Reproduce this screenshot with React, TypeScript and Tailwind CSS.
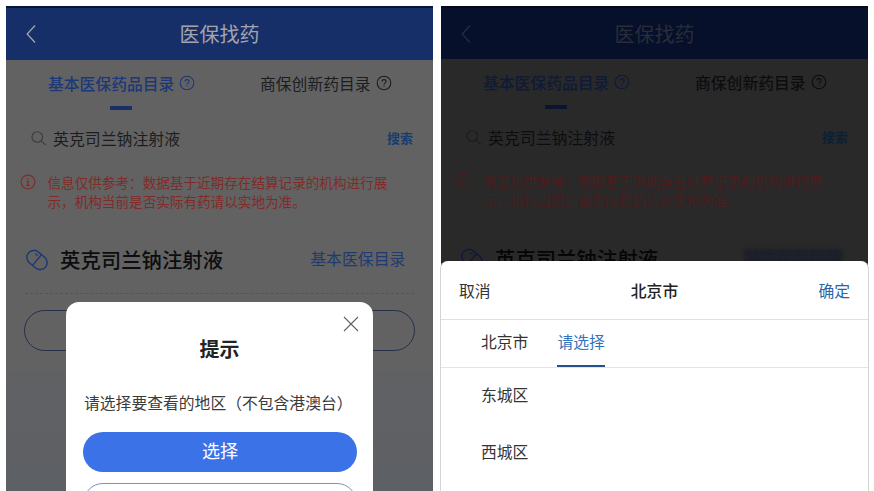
import { clsx } from "clsx";

type Dim = "light" | "dark";

function HelpIcon({ className }: { className: string }) {
  return (
    <svg className={className} width="16" height="16" viewBox="0 0 16 16" fill="none" stroke="currentColor">
      <circle cx="8" cy="8" r="6.8" strokeWidth="1.1" />
      <path d="M6 6.6c0-1.2.8-2 2-2s2 .8 2 1.9c0 1.3-1.7 1.4-1.9 2.9" strokeWidth="1.1" />
      <path d="M8 10.4v1.2" strokeWidth="1.2" />
    </svg>
  );
}

function DrugScreen({ dim }: { dim: Dim }) {
  const light = dim === "light";
  const blue = light ? "text-[#1c3878]" : "text-[#0e1a38]";
  const ink = light ? "text-[#1c1d20]" : "text-[#0d0d0f]";
  const red = light ? "text-[#812b28]" : "text-[#4a1d1e]";
  return (
    <div className={clsx("h-full w-full", light ? "bg-[#626262]" : "bg-[#292929]")}>
      <header
        className={clsx(
          "flex items-center border-t-2",
          light
            ? "h-[54px] border-[#0b1632] bg-[#172f69] text-[#a3a5ab]"
            : "h-[53px] border-[#040a18] bg-[#06102a] text-[#282d39]",
        )}
      >
        <svg className="ml-5 w-[10px]" height="20" viewBox="0 0 10 20" fill="none" stroke="currentColor" strokeWidth="1.3">
          <path d="M9 1.5 1.2 10 9 18.5" />
        </svg>
        <h1 className="mr-[30px] grow text-center text-[20px] leading-none">医保找药</h1>
      </header>

      <nav className="flex h-[51px] pl-[42px] text-[15.8px] leading-[47px]">
        <div className={clsx("flex w-[212px] flex-col", blue)}>
          <div className="flex h-[46px] items-center gap-[5px] font-medium">
            基本医保药品目录 <HelpIcon className="shrink-0" />
          </div>
          <div className={clsx("ml-[62px] h-1 w-[22px] shrink-0", light ? "bg-[#1a2f68]" : "bg-[#0b1530]")} />
        </div>
        <div className={clsx("flex h-[46px] items-center gap-[5px]", ink, light ? "font-normal" : "font-medium")}>
          商保创新药目录 <HelpIcon className="shrink-0" />
        </div>
      </nav>

      <div className="flex h-[56px] items-center pr-5 pl-6">
        <svg
          className={light ? "text-[#3c3c3e]" : "text-[#1c1c1d]"}
          width="18" height="18" viewBox="0 0 18 18" fill="none" stroke="currentColor" strokeWidth="1.1"
        >
          <circle cx="7.3" cy="7" r="5.3" />
          <path d="m11.2 10.8 4.6 4.4" />
        </svg>
        <span className={clsx("ml-[5px] grow text-[15.9px] leading-none", ink)}>英克司兰钠注射液</span>
        <span className={clsx("pb-[3px] text-[13px] leading-none font-bold", light ? "text-[#173d70]" : "text-[#0b2036]")}>
          搜索
        </span>
      </div>

      <div className={clsx("flex h-[64px] pt-[6px] pl-[14px]", red)}>
        <svg className="mt-[1px] shrink-0" width="16" height="16" viewBox="0 0 16 16" fill="none" stroke="currentColor">
          <circle cx="8" cy="8" r="6.9" strokeWidth="1.2" />
          <path d="M8 4v1.5M8 6.8v4.8M6.4 11.5h3.2M6.6 7.1H8" strokeWidth="1.3" />
        </svg>
        <p className="ml-[11.5px] w-[345px] text-[13.6px] leading-[18.5px]">
          信息仅供参考：数据基于近期存在结算记录的机构进行展示，机构当前是否实际有药请以实地为准。
        </p>
      </div>

      <div className="flex h-[56px] items-center px-[19px]">
        <svg className={clsx("mt-[2px]", blue)} width="24" height="24" viewBox="0 0 24 24" fill="none" stroke="currentColor" strokeWidth="1.5">
          <g transform="rotate(40 12 12)">
            <rect x="0.9" y="5" width="22.2" height="14" rx="7" />
            <path d="M12 5v14M6.8 8.2h2.8" />
          </g>
        </svg>
        <h2 className={clsx("ml-[11px] grow text-[20.4px] leading-none font-medium", light ? "text-[#0d0d0f]" : "text-[#050506]")}>
          英克司兰钠注射液
        </h2>
        <span
          className={clsx(
            "mr-[8.5px] text-[15.9px] leading-none",
            light ? "text-[#1f3a70]" : "bg-[#1f212a] text-[#1a1e2b] shadow-[0_0_3px_1px_#1f212a]",
          )}
        >
          基本医保目录
        </span>
      </div>

      <div className={clsx("mx-[19px] border-t", light ? "mt-[6px] border-dashed border-[#545454]" : "border-[#222222]")} />
      <div className="px-[18px] pt-4 pb-5">
        <div className="h-[41px] rounded-full border border-[#262e4a]" />
      </div>
      {light && <div className="h-[125px] bg-linear-to-b from-[#606163] to-[#5d6065]" />}
    </div>
  );
}

function RegionPrompt() {
  return (
    <section className="absolute top-[295.5px] left-[60px] h-[240px] w-[307px] rounded-[13px] bg-white px-[17px] text-center">
      <svg className="absolute top-[14px] right-[14px]" width="16" height="16" viewBox="0 0 16 16" stroke="#626262" strokeWidth="1.1">
        <path d="m1 1 14 14M15 1 1 15" />
      </svg>
      <h3 className="mt-[37px] text-[20px] leading-5 font-bold text-[#232323]">提示</h3>
      <p className="mt-[36px] text-left text-[15.8px] leading-4 whitespace-nowrap text-[#3b3b3b]">
        <span className="ml-[1px]">请选择要查看的地区（不包含港澳台）</span>
      </p>
      <button className="mt-[21px] block h-[40px] w-[274px] rounded-full bg-[#3b72e8] pb-[3px] text-[18px] leading-[36px] text-white">
        选择
      </button>
      <button className="mt-[11px] block h-[40px] w-[274px] rounded-full border border-[#7f91be]" />
    </section>
  );
}

function RegionSheet() {
  return (
    <section className="absolute top-[255px] -left-px h-[240px] w-[429px] rounded-t-[8px] border-x border-[#d4d4d4] bg-white text-[15.8px] text-[#343434]">
      <div className="flex h-[59px] items-center justify-between border-b border-[#e0e0e0] px-[18px] pt-[2px]">
        <span>取消</span>
        <span className="font-medium text-[#222222]">北京市</span>
        <span className="text-[#2868a9]">确定</span>
      </div>
      <div className="flex h-[48px] gap-[29px] border-b border-[#e4e4e4] pl-10 leading-[43px]">
        <span>北京市</span>
        <span className="h-[47px] border-b-2 border-[#24508f] text-[#3474bd]">请选择</span>
      </div>
      <ul className="pl-10 leading-[57px]">
        <li className="-mt-[2px]">东城区</li>
        <li>西城区</li>
      </ul>
    </section>
  );
}

export default function App() {
  return (
    <main
      lang="zh-CN"
      className="flex h-[491px] w-[874px] gap-2 overflow-hidden bg-white pt-[6px] pl-[6px] font-['Noto_Sans_CJK_SC',sans-serif]"
    >
      <div className="relative h-[485px] w-[427px] overflow-hidden">
        <DrugScreen dim="light" />
        <RegionPrompt />
      </div>
      <div className="relative h-[485px] w-[427px]">
        <DrugScreen dim="dark" />
        <RegionSheet />
      </div>
    </main>
  );
}
